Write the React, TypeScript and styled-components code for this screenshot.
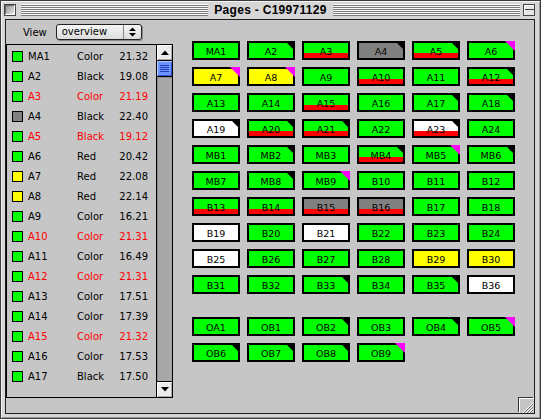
import React from 'react';
import styled, { createGlobalStyle } from 'styled-components';

type Fill = 'g' | 'y' | 'w' | 'k';
type Corner = 'black' | 'magenta' | undefined;

const FILLS: Record<Fill, string> = {
  g: '#00ff00',
  y: '#ffff00',
  w: '#ffffff',
  k: '#808080',
};

interface Page {
  name: string;
  fill: Fill;
  bar: boolean;
  corner: Corner;
}

// spec: "NAME fill [r] [b|m]"  r = red bar, b = black corner, m = magenta corner
function page(spec: string): Page {
  const [name, fill, ...flags] = spec.split(' ');
  return {
    name,
    fill: fill as Fill,
    bar: flags.includes('r'),
    corner: flags.includes('b') ? 'black' : flags.includes('m') ? 'magenta' : undefined,
  };
}

const mainPages = [
  'MA1 g', 'A2 g b', 'A3 g r', 'A4 k b', 'A5 g r b', 'A6 g m',
  'A7 y m', 'A8 y m', 'A9 g', 'A10 g r', 'A11 g', 'A12 g r b',
  'A13 g', 'A14 g', 'A15 g r', 'A16 g', 'A17 g b', 'A18 g b',
  'A19 w b', 'A20 g r b', 'A21 g r b', 'A22 g', 'A23 w r b', 'A24 g',
  'MB1 g', 'MB2 g b', 'MB3 g', 'MB4 g r b', 'MB5 g m', 'MB6 g b',
  'MB7 g', 'MB8 g b', 'MB9 g m', 'B10 g', 'B11 g', 'B12 g',
  'B13 g r', 'B14 g r', 'B15 k r', 'B16 k r', 'B17 g', 'B18 g',
  'B19 w', 'B20 g', 'B21 w', 'B22 g', 'B23 g', 'B24 g',
  'B25 w', 'B26 g', 'B27 g', 'B28 g', 'B29 y', 'B30 y',
  'B31 g', 'B32 g', 'B33 g b', 'B34 g', 'B35 g b', 'B36 w',
].map(page);

const otherPages = [
  'OA1 g', 'OB1 g', 'OB2 g b', 'OB3 g', 'OB4 g b', 'OB5 g m',
  'OB6 g b', 'OB7 g b', 'OB8 g b', 'OB9 g m',
].map(page);

const listRows: [string, Fill, string, string, boolean][] = [
  ['MA1', 'g', 'Color', '21.32', false],
  ['A2', 'g', 'Black', '19.08', false],
  ['A3', 'g', 'Color', '21.19', true],
  ['A4', 'k', 'Black', '22.40', false],
  ['A5', 'g', 'Black', '19.12', true],
  ['A6', 'g', 'Red', '20.42', false],
  ['A7', 'y', 'Red', '22.08', false],
  ['A8', 'y', 'Red', '22.14', false],
  ['A9', 'g', 'Color', '16.21', false],
  ['A10', 'g', 'Color', '21.31', true],
  ['A11', 'g', 'Color', '16.49', false],
  ['A12', 'g', 'Color', '21.31', true],
  ['A13', 'g', 'Color', '17.51', false],
  ['A14', 'g', 'Color', '17.39', false],
  ['A15', 'g', 'Color', '21.32', true],
  ['A16', 'g', 'Color', '17.53', false],
  ['A17', 'g', 'Black', '17.50', false],
];

const GlobalStyle = createGlobalStyle`
  body {
    margin: 0;
    background: #c6c6c6;
    font-family: 'DejaVu Sans', sans-serif;
  }
`;

const Window = styled.div`
  box-sizing: border-box;
  width: 541px;
  height: 419px;
  border: 1px solid #3a3a3a;
  background: #d6d6d6;
  box-shadow: inset 1px 1px 0 #f4f4f4, inset -1px -1px 0 #9a9a9a;
  display: flex;
  flex-direction: column;
`;

const TitleBar = styled.div`
  height: 18px;
  flex: none;
  display: flex;
  align-items: center;
  gap: 5px;
  padding: 0 5px 0 3px;
`;

const CloseBox = styled.div`
  box-sizing: border-box;
  width: 12px;
  height: 12px;
  border: 1px solid #444;
  background: linear-gradient(135deg, #8a8a8a 0%, #f4f4f4 100%);
  box-shadow: inset -1px -1px 0 #fff, inset 1px 1px 0 #666;
`;

const ShadeBox = styled.div`
  box-sizing: border-box;
  width: 12px;
  height: 12px;
  margin-left: -2px;
  border: 1px solid #444;
  background: linear-gradient(to bottom, #e6e6e6 0 4px, #444 4px 5px, #e6e6e6 5px);
  box-shadow: inset 1px 1px 0 #fff;
`;

const Stripes = styled.div`
  flex: 1;
  height: 12px;
  background: repeating-linear-gradient(to bottom, #f8f8f8 0 1px, #7c7c7c 1px 2px);
`;

const Title = styled.div`
  font: bold 12px 'Liberation Sans', Arial, sans-serif;
  color: #000;
  letter-spacing: 0.3px;
  padding: 0 1px;
`;

const Content = styled.div`
  position: relative;
  flex: 1;
  margin: 0 5px 4px 4px;
  border: 1px solid #1e1e1e;
  background: #c6c6c6;
  display: flex;
`;

const LeftPane = styled.div`
  width: 167px;
  display: flex;
  flex-direction: column;
`;

const ViewBar = styled.div`
  height: 24px;
  display: flex;
  align-items: center;
  gap: 9px;
  padding-left: 17px;
  font-size: 10px;
`;

const Popup = styled.div`
  box-sizing: border-box;
  width: 86px;
  height: 16px;
  border: 1px solid #222;
  border-radius: 3px;
  background: linear-gradient(to bottom, #f6f6f6, #dcdcdc);
  box-shadow: 1px 1px 0 #888;
  display: flex;
  font-size: 10px;
`;

const PopupText = styled.div`
  flex: 1;
  padding-left: 5px;
  line-height: 13px;
`;

const PopupArrows = styled.div`
  width: 17px;
  border-left: 1px solid #888;
  display: flex;
  align-items: center;
  justify-content: center;
`;

const ListBox = styled.div`
  height: 354px;
  box-sizing: border-box;
  border: 1px solid #000;
  display: flex;
`;

const Rows = styled.div`
  flex: 1;
  padding-top: 1px;
`;

const Row = styled.div<{ $alert: boolean }>`
  height: 20px;
  display: grid;
  grid-template-columns: 16px 49px 1fr auto;
  align-items: center;
  padding: 0 8px 0 5px;
  font-size: 10px;
  color: ${p => (p.$alert ? '#ff0000' : '#000')};
`;

const Swatch = styled.div<{ $fill: string }>`
  box-sizing: border-box;
  width: 11px;
  height: 11px;
  border: 1px solid #000;
  background: ${p => p.$fill};
`;

const ScrollBar = styled.div`
  width: 15px;
  border-left: 1px solid #000;
  display: flex;
  flex-direction: column;
`;

const ArrowButton = styled.div<{ $down?: boolean }>`
  height: 15px;
  flex: none;
  background: #ececec;
  box-shadow: inset 1px 1px 0 #fff, inset -1px -1px 0 #aaa;
  ${p => (p.$down ? 'border-top' : 'border-bottom')}: 1px solid #000;
  display: flex;
  align-items: center;
  justify-content: center;
`;

const Thumb = styled.div`
  height: 15px;
  flex: none;
  border-bottom: 1px solid #000;
  background: #6e93ff;
  box-shadow: inset 1px 1px 0 #b4c8ff, inset -1px -1px 0 #3355cc;
  display: flex;
  flex-direction: column;
  align-items: center;
  justify-content: center;
  gap: 1px;
`;

const Grip = styled.div`
  width: 9px;
  height: 1px;
  background: #1d3fb0;
`;

const Track = styled.div`
  flex: 1;
  background: #a8a8a8;
  box-shadow: inset 1px 1px 0 #8a8a8a;
`;

const Tiles = styled.div`
  padding: 21px 0 0 19px;
  display: flex;
  flex-direction: column;
  gap: 23px;
`;

const TileGrid = styled.div`
  display: grid;
  grid-template-columns: repeat(6, 48px);
  grid-auto-rows: 19px;
  gap: 7px;
`;

const Tile = styled.div<{ $fill: string; $bar: boolean; $corner?: string }>`
  position: relative;
  box-sizing: border-box;
  border: 2px solid #000;
  background: ${p => (p.$bar ? `linear-gradient(to top, #ff0000 0 5px, ${p.$fill} 5px)` : p.$fill)};
  display: flex;
  align-items: center;
  justify-content: center;
  padding-top: 1px;
  font-size: 9.5px;
  color: #000;

  &::after {
    content: '';
    display: ${p => (p.$corner ? 'block' : 'none')};
    position: absolute;
    top: -2px;
    right: -2px;
    width: 10px;
    height: 10px;
    background: ${p => p.$corner || 'transparent'};
    clip-path: polygon(0 0, 100% 0, 100% 100%);
  }
`;

const ResizeBox = styled.div`
  position: absolute;
  right: 0;
  bottom: 0;
  width: 15px;
  height: 15px;
  box-sizing: border-box;
  border-top: 1px solid #fff;
  border-left: 1px solid #fff;
  box-shadow: -1px -1px 0 #333;
  background: #c6c6c6;
`;

const Triangle = ({ down }: { down?: boolean }) => (
  <svg width="8" height="5" viewBox="0 0 8 5">
    <path d={down ? 'M0 0h8L4 4.5z' : 'M0 5h8L4 0.5z'} fill="#000" />
  </svg>
);

export default function App() {
  return (
    <>
      <GlobalStyle />
      <Window>
        <TitleBar>
          <CloseBox />
          <Stripes />
          <Title>Pages - C19971129</Title>
          <Stripes />
          <ShadeBox />
        </TitleBar>
        <Content>
          <LeftPane>
            <ViewBar>
              View
              <Popup>
                <PopupText>overview</PopupText>
                <PopupArrows>
                  <svg width="7" height="10" viewBox="0 0 7 10">
                    <path d="M0 4h7L3.5 0.5zM0 6h7L3.5 9.5z" fill="#000" />
                  </svg>
                </PopupArrows>
              </Popup>
            </ViewBar>
            <ListBox>
              <Rows>
                {listRows.map(([name, fill, ink, size, alert]) => (
                  <Row key={name} $alert={alert}>
                    <Swatch $fill={FILLS[fill]} />
                    <span>{name}</span>
                    <span>{ink}</span>
                    <span>{size}</span>
                  </Row>
                ))}
              </Rows>
              <ScrollBar>
                <ArrowButton>
                  <Triangle />
                </ArrowButton>
                <Thumb>
                  <Grip />
                  <Grip />
                  <Grip />
                  <Grip />
                </Thumb>
                <Track />
                <ArrowButton $down>
                  <Triangle down />
                </ArrowButton>
              </ScrollBar>
            </ListBox>
          </LeftPane>
          <Tiles>
            <TileGrid>
              {mainPages.map(p => (
                <Tile key={p.name} $fill={FILLS[p.fill]} $bar={p.bar} $corner={p.corner}>
                  {p.name}
                </Tile>
              ))}
            </TileGrid>
            <TileGrid>
              {otherPages.map(p => (
                <Tile key={p.name} $fill={FILLS[p.fill]} $bar={p.bar} $corner={p.corner}>
                  {p.name}
                </Tile>
              ))}
            </TileGrid>
          </Tiles>
          <ResizeBox>
            <svg width="14" height="14" viewBox="0 0 14 14">
              <path d="M4 13L13 4M7 13L13 7M10 13L13 10" stroke="#777" strokeWidth="1" />
              <path d="M3 13L13 3M6 13L13 6M9 13L13 9" stroke="#fff" strokeWidth="1" />
            </svg>
          </ResizeBox>
        </Content>
      </Window>
    </>
  );
}
